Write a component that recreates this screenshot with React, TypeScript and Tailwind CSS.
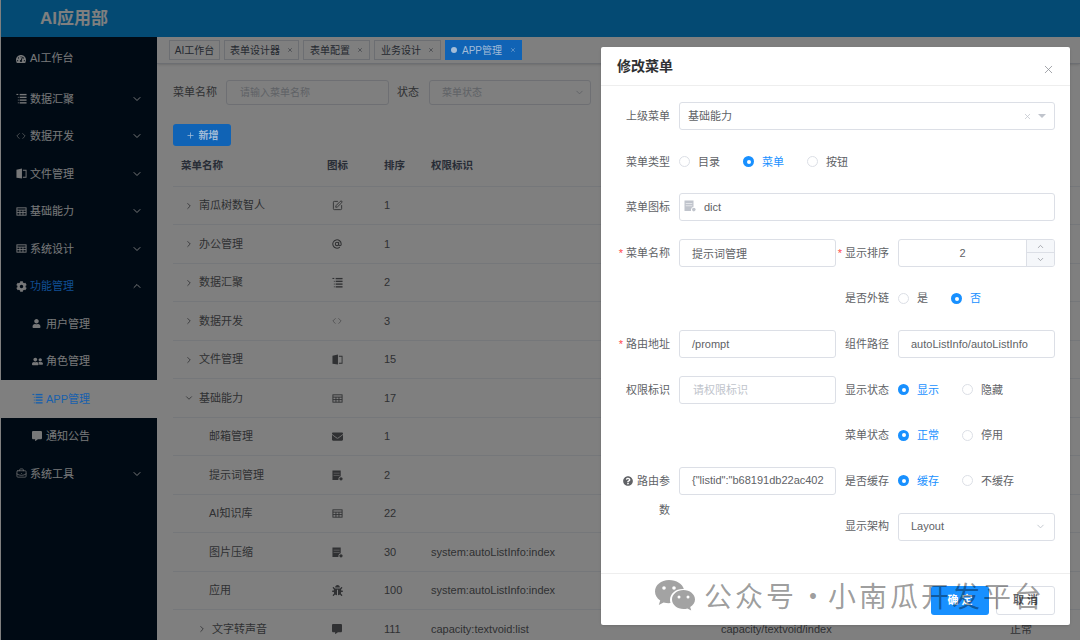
import React from 'react';
import { ChevronDown, ChevronRight, ChevronUp, X, Plus, Code, SquarePen, AtSign, BriefcaseBusiness } from 'lucide-react';
import { FaUser, FaUserFriends, FaCog, FaEnvelope, FaBug, FaCommentAlt, FaTachometerAlt, FaQuestionCircle } from 'react-icons/fa';

const font = { fontFamily: '"Liberation Sans","Noto Sans CJK SC",sans-serif' };

const TableIcon = ({ className = '' }: { className?: string }) => (
  <svg viewBox="0 0 12 12" className={className} fill="none" stroke="currentColor" strokeWidth="1">
    <rect x="1" y="2" width="10" height="8" />
    <path d="M1 4.5h10M1 7.2h10M4.3 4.5V10M7.6 4.5V10" />
  </svg>
);
const TreeIcon = ({ className = '' }: { className?: string }) => (
  <svg viewBox="0 0 12 12" className={className} fill="currentColor">
    <rect x="0.5" y="1" width="2" height="1.2" />
    <rect x="4" y="1" width="7.5" height="1.5" />
    <rect x="4" y="4" width="7.5" height="1.5" />
    <rect x="4" y="7" width="7.5" height="1.5" />
    <rect x="4" y="10" width="7.5" height="1.5" />
    <rect x="2" y="4.2" width="1" height="1" />
    <rect x="2" y="7.2" width="1" height="1" />
    <rect x="2" y="10.2" width="1" height="1" />
  </svg>
);
const DictIcon = ({ className = '' }: { className?: string }) => (
  <svg viewBox="0 0 12 12" className={className} fill="currentColor">
    <path d="M0.5 0.5h9v6.2a3 3 0 0 0-2.5 2.8v1.5H0.5z" />
    <rect x="1.7" y="3" width="6.6" height="0.8" fill="#fff" opacity="0.7" />
    <rect x="1.7" y="5.4" width="6.6" height="0.8" fill="#fff" opacity="0.7" />
    <circle cx="9.8" cy="9.6" r="1.8" />
  </svg>
);
const BookIcon = ({ className = '' }: { className?: string }) => (
  <svg viewBox="0 0 12 12" className={className} fill="currentColor">
    <path d="M0.5 2L6.5 0.5V11.5L0.5 10.5z" />
    <path d="M7.5 2h4v8.5h-4v-1h3V3h-3z" />
  </svg>
);

type MenuItem = { icon: React.ReactNode; label: string; arrow?: 'down' | 'up'; sub?: boolean; active?: boolean; blue?: boolean; first?: boolean };
const menu: MenuItem[] = [
  { icon: <FaTachometerAlt size={10} />, label: 'AI工作台', first: true },
  { icon: <TreeIcon className="w-[11px] h-[11px]" />, label: '数据汇聚', arrow: 'down' },
  { icon: <Code size={10} className="opacity-70" />, label: '数据开发', arrow: 'down' },
  { icon: <BookIcon className="w-[11px] h-[11px]" />, label: '文件管理', arrow: 'down' },
  { icon: <TableIcon className="w-[11px] h-[11px]" />, label: '基础能力', arrow: 'down' },
  { icon: <TableIcon className="w-[11px] h-[11px]" />, label: '系统设计', arrow: 'down' },
  { icon: <FaCog size={11} />, label: '功能管理', arrow: 'up', blue: true },
  { icon: <FaUser size={9} />, label: '用户管理', sub: true },
  { icon: <FaUserFriends size={11} />, label: '角色管理', sub: true },
  { icon: <TreeIcon className="w-[11px] h-[11px]" />, label: 'APP管理', sub: true, active: true },
  { icon: <FaCommentAlt size={10} />, label: '通知公告', sub: true },
  { icon: <BriefcaseBusiness size={11} strokeWidth={1.5} />, label: '系统工具', arrow: 'down' },
];

function Sidebar() {
  return (
    <aside className="w-[156px] shrink-0 bg-[#001428] text-[#eef0f2] text-[11px]">
      {menu.map((m) => (
        <div
          key={m.label}
          className={`flex items-center ${m.first ? 'h-[43px]' : 'h-[37.5px]'} ${m.sub ? 'pl-[31px]' : 'pl-[15px]'} ${m.active ? 'bg-white' : ''}`}
        >
          <span className={`w-[14px] flex justify-start ${m.active ? 'relative z-10 text-[#1760ad]' : ''}`}>{m.icon}</span>
          <span className={`flex-1 ${m.active ? 'relative z-10 text-[#1760ad]' : ''} ${m.blue ? 'relative z-10 text-[#114f95]' : ''}`}>{m.label}</span>
          {m.arrow === 'down' && <ChevronDown size={12} className="mr-[14px]" />}
          {m.arrow === 'up' && <ChevronUp size={12} className="mr-[14px]" />}
        </div>
      ))}
    </aside>
  );
}

const tabs = [
  { label: 'AI工作台', w: 'w-[51px]' },
  { label: '表单设计器', close: true, w: 'w-[75px]' },
  { label: '表单配置', close: true, w: 'w-[67px]' },
  { label: '业务设计', close: true, w: 'w-[67px]' },
];

function Tabs() {
  return (
    <div className="h-[27px] shrink-0 flex items-start gap-[4px] pl-[12px] pt-[3px] text-[10px] text-[#495060] border-b border-[#d8dce5] shadow-sm">
      {tabs.map((t) => (
        <div key={t.label} className={`${t.w} h-[20px] border border-[#d8dce5] flex items-center justify-center gap-[7px]`}>
          <span>{t.label}</span>
          {t.close && <X size={6} />}
        </div>
      ))}
      <div className="relative z-10 w-[77px] h-[20px] bg-[#1063b5] text-[#a3bcd8] flex items-center justify-center gap-[5px]">
        <span className="w-[6px] h-[6px] rounded-full bg-[#a3bcd8]" />
        <span>APP管理</span>
        <X size={6} className="ml-[3px]" />
      </div>
    </div>
  );
}

type Row = { name: string; indent?: number; tree?: 'r' | 'd'; icon: React.ReactNode; order: string; perm?: string; path?: string; status?: string };
const I = 'w-[11px] h-[11px]';
const rows: Row[] = [
  { name: '南瓜树数智人', tree: 'r', icon: <SquarePen size={11} />, order: '1' },
  { name: '办公管理', tree: 'r', icon: <AtSign size={10} strokeWidth={2.5} />, order: '1' },
  { name: '数据汇聚', tree: 'r', icon: <TreeIcon className={I} />, order: '2' },
  { name: '数据开发', tree: 'r', icon: <Code size={10} className="opacity-60" />, order: '3' },
  { name: '文件管理', tree: 'r', icon: <BookIcon className={I} />, order: '15' },
  { name: '基础能力', tree: 'd', icon: <TableIcon className={I} />, order: '17' },
  { name: '邮箱管理', indent: 1, icon: <FaEnvelope size={11} />, order: '1' },
  { name: '提示词管理', indent: 1, icon: <DictIcon className={I} />, order: '2' },
  { name: 'AI知识库', indent: 1, icon: <TableIcon className={I} />, order: '22' },
  { name: '图片压缩', indent: 1, icon: <DictIcon className={I} />, order: '30', perm: 'system:autoListInfo:index' },
  { name: '应用', indent: 1, icon: <FaBug size={11} />, order: '100', perm: 'system:autoListInfo:index' },
  { name: '文字转声音', indent: 2, tree: 'r', icon: <FaCommentAlt size={10} />, order: '111', perm: 'capacity:textvoid:list', path: 'capacity/textvoid/index', status: '正常' },
];

function TableRow({ r }: { r: Row }) {
  return (
    <div className="flex items-center h-[38.5px] shrink-0 border-b border-[#ebeef5] text-[11px] text-[#606266]">
      <div className={`w-[154px] shrink-0 flex items-center ${r.indent === 1 ? 'pl-[36px]' : r.indent === 2 ? 'pl-[24px]' : 'pl-[11px]'}`}>
        {r.tree === 'r' && <ChevronRight size={10} className="mr-[5px] shrink-0" />}
        {r.tree === 'd' && <ChevronDown size={10} className="mr-[5px] shrink-0" />}
        <span>{r.name}</span>
      </div>
      <div className="w-[57px] shrink-0 flex">
        <span className="w-[20px] flex justify-center">{r.icon}</span>
      </div>
      <div className="w-[47px] shrink-0">{r.order}</div>
      <div className="w-[290px] shrink-0">{r.perm}</div>
      <div className="w-[289px] shrink-0">{r.path}</div>
      <div>{r.status}</div>
    </div>
  );
}

function Main() {
  return (
    <main className="flex-1 min-w-0 flex flex-col bg-white overflow-hidden">
      <Tabs />
      <div className="pl-[16px] flex-1 min-h-0 flex flex-col">
        <div className="flex items-center h-[25px] mt-[16px] text-[11px] text-[#606266] shrink-0">
          <span className="w-[53px]">菜单名称</span>
          <div className="w-[163px] h-[25px] border border-[#dcdfe6] rounded-[3px] flex items-center pl-[13px] text-[10px] text-[#c0c4cc]">请输入菜单名称</div>
          <span className="ml-[8px] w-[32px]">状态</span>
          <div className="w-[162px] h-[25px] border border-[#dcdfe6] rounded-[3px] flex items-center justify-between pl-[12px] pr-[5px] text-[10px] text-[#c0c4cc]">
            <span>菜单状态</span>
            <ChevronDown size={11} />
          </div>
        </div>
        <div className="relative z-10 mt-[19px] w-[58px] h-[22px] shrink-0 rounded-[3px] bg-[#1063b5] text-[#a3bcd8] text-[10px] font-bold flex items-center justify-center gap-[4px]">
          <Plus size={9} />
          <span>新增</span>
        </div>
        <div className="flex items-center h-[40.8px] shrink-0 border-b border-[#ebeef5] text-[10.5px] font-bold text-[#515a6e]">
          <div className="w-[154px] pl-[8px]">菜单名称</div>
          <div className="w-[57px]">图标</div>
          <div className="w-[47px]">排序</div>
          <div>权限标识</div>
        </div>
        {rows.map((r) => (
          <TableRow key={r.name} r={r} />
        ))}
      </div>
    </main>
  );
}

function Label({ children, required }: { children: React.ReactNode; required?: boolean }) {
  return (
    <div className="w-[54px] shrink-0 mr-[9px] text-right text-[11px] text-[#606266] whitespace-nowrap">
      {required && <span className="text-[#ff4949] mr-[3px]">*</span>}
      {children}
    </div>
  );
}

function Radio({ label, checked, mr }: { label: string; checked?: boolean; mr: string }) {
  return (
    <div className={`flex items-center ${mr}`}>
      {checked ? (
        <span className="w-[11px] h-[11px] rounded-full bg-[#1890ff] flex items-center justify-center shrink-0">
          <span className="w-[4px] h-[4px] rounded-full bg-white" />
        </span>
      ) : (
        <span className="w-[11px] h-[11px] rounded-full border border-[#dcdfe6] shrink-0" />
      )}
      <span className={`ml-[8px] text-[11px] ${checked ? 'text-[#1890ff]' : 'text-[#606266]'}`}>{label}</span>
    </div>
  );
}

const inputCls = 'h-[28px] border border-[#dcdfe6] rounded-[3px] flex items-center text-[11px] text-[#606266]';

function Cell({ children, className = '' }: { children?: React.ReactNode; className?: string }) {
  return <div className={`flex items-center ${className}`}>{children}</div>;
}

function Modal() {
  return (
    <div className="absolute z-20 left-[601px] top-[47px] w-[469px] h-[578px] bg-white rounded-[2px] shadow flex flex-col">
      <div className="h-[39px] shrink-0 border-b border-[#eeeeee] pl-[16px] pr-[15px] flex items-center justify-between">
        <span className="text-[14px] font-bold text-[#303133]">修改菜单</span>
        <X size={13} strokeWidth={1.5} className="text-[#909399] mt-[6px]" />
      </div>
      <div className="flex-1 min-h-0 pt-[7.4px] pl-[15px] pr-[15px] grid grid-cols-[220px_219px] auto-rows-[45.6px] content-start">
        <Cell className="col-span-2">
          <Label>上级菜单</Label>
          <div className={`${inputCls} flex-1 pl-[8px] pr-[8px] justify-between`}>
            <span>基础能力</span>
            <span className="flex items-center gap-[6px] text-[#c0c4cc]">
              <X size={9} />
              <span className="w-0 h-0 border-x-[4px] border-x-transparent border-t-[4px] border-t-[#c0c4cc]" />
            </span>
          </div>
        </Cell>
        <Cell className="col-span-2">
          <Label>菜单类型</Label>
          <Radio label="目录" mr="mr-[23px]" />
          <Radio label="菜单" checked mr="mr-[23px]" />
          <Radio label="按钮" mr="" />
        </Cell>
        <Cell className="col-span-2">
          <Label>菜单图标</Label>
          <div className={`${inputCls} flex-1 pl-[4px]`}>
            <DictIcon className="w-[12px] h-[12px] text-[#c0c4cc] -mt-[3px]" />
            <span className="ml-[8px]">dict</span>
          </div>
        </Cell>
        <Cell>
          <Label required>菜单名称</Label>
          <div className={`${inputCls} w-[157px] pl-[12px] pt-[2px]`}>提示词管理</div>
        </Cell>
        <Cell className="-ml-px">
          <Label required>显示排序</Label>
          <div className={`${inputCls} w-[157px] overflow-hidden`}>
            <span className="flex-1 text-center">2</span>
            <div className="w-[28px] h-full border-l border-[#dcdfe6] flex flex-col bg-[#f5f7fa] text-[#909399]">
              <span className="flex-1 flex items-center justify-center border-b border-[#dcdfe6]"><ChevronUp size={9} /></span>
              <span className="flex-1 flex items-center justify-center"><ChevronDown size={9} /></span>
            </div>
          </div>
        </Cell>
        <Cell />
        <Cell className="-ml-px">
          <Label>是否外链</Label>
          <Radio label="是" mr="mr-[23px]" />
          <Radio label="否" checked mr="" />
        </Cell>
        <Cell>
          <Label required>路由地址</Label>
          <div className={`${inputCls} w-[157px] pl-[12px] border-[#c0c4cc]`}>/prompt</div>
        </Cell>
        <Cell className="-ml-px">
          <Label>组件路径</Label>
          <div className={`${inputCls} w-[157px] pl-[12px]`}>autoListInfo/autoListInfo</div>
        </Cell>
        <Cell>
          <Label>权限标识</Label>
          <div className={`${inputCls} w-[157px] pl-[13px] !text-[#c0c4cc]`}>请权限标识</div>
        </Cell>
        <Cell className="-ml-px">
          <Label>显示状态</Label>
          <Radio label="显示" checked mr="mr-[23px]" />
          <Radio label="隐藏" mr="" />
        </Cell>
        <Cell />
        <Cell className="-ml-px">
          <Label>菜单状态</Label>
          <Radio label="正常" checked mr="mr-[23px]" />
          <Radio label="停用" mr="" />
        </Cell>
        <div className="row-span-2 flex items-start pt-[8.5px]">
          <div className="w-[54px] shrink-0 mr-[9px] text-right text-[11px] leading-[28px] text-[#606266]">
            <span className="inline-flex items-center whitespace-nowrap -ml-[6px]">
              <FaQuestionCircle size={10} className="mr-[4px]" />
              路由参
            </span>
            <br />数
          </div>
          <div className={`${inputCls} w-[157px] pl-[12px] whitespace-nowrap overflow-hidden`}>{'{"listid":"b68191db22ac402'}</div>
        </div>
        <Cell className="-ml-px">
          <Label>是否缓存</Label>
          <Radio label="缓存" checked mr="mr-[23px]" />
          <Radio label="不缓存" mr="" />
        </Cell>
        <Cell className="-ml-px">
          <Label>显示架构</Label>
          <div className={`${inputCls} w-[157px] pl-[12px] pr-[8px] justify-between`}>
            <span>Layout</span>
            <ChevronDown size={11} className="text-[#c0c4cc]" />
          </div>
        </Cell>
      </div>
      <div className="h-[52px] shrink-0 border-t border-[#eeeeee] flex items-center justify-end pr-[15px] gap-[7px] pt-[1px]">
        <div className="w-[58px] h-[29px] rounded-[3px] bg-[#1890ff] text-white text-[11px] font-bold flex items-center justify-center">确 定</div>
        <div className="w-[59px] h-[29px] rounded-[3px] border border-[#dcdfe6] text-[#606266] text-[11px] font-bold flex items-center justify-center">取 消</div>
      </div>
    </div>
  );
}

function Watermark() {
  return (
    <div className="absolute z-30 left-[654px] top-[578px] flex items-center text-black/40 pointer-events-none whitespace-nowrap">
      <svg viewBox="0 0 42 34" className="w-[42px] h-[34px]">
        <path fill="#a3a3a3" d="M15 1C7 1 1 6.2 1 12.6c0 3.7 2 6.8 5.2 9L4.8 26l4.8-2.6c1.7.5 3.5.8 5.4.8.5 0 1 0 1.500-.1-.3-1-.5-2-.5-3.100 0-6.100 5.600-11 12.500-11h1.300C28.700 5 22.500 1 15 1z" />
        <circle cx="10" cy="9" r="1.8" fill="#fff" />
        <circle cx="20" cy="9" r="1.8" fill="#fff" />
        <path fill="#a3a3a3" d="M41 20.500c0-5.300-5.200-9.500-11.500-9.500S18 15.200 18 20.500 23.200 30 29.500 30c1.400 0 2.700-.2 3.900-.6l3.800 2.100-1-3.500c2.900-1.800 4.800-4.500 4.800-7.500z" />
        <circle cx="25" cy="18" r="1.5" fill="#fff" />
        <circle cx="34" cy="18" r="1.5" fill="#fff" />
      </svg>
      <span className="ml-[8px] text-[28px] tracking-[3px] leading-[36px] -mt-[1px]" style={{ fontFamily: '"Noto Sans CJK SC",sans-serif' }}>
        公众号<span className="ml-[2px] mr-[1px] inline-block w-[28px] text-center tracking-normal">·</span>小南瓜开发平台
      </span>
    </div>
  );
}

export default function App() {
  return (
    <div className="relative w-[1080px] h-[640px] overflow-hidden bg-white" style={font}>
      <div className="flex flex-col h-full pl-px">
        <header className="h-[37px] shrink-0 bg-[#0994e6] flex items-center pl-[39px] text-[17px] font-bold text-white">AI应用部</header>
        <div className="flex flex-1 min-h-0">
          <Sidebar />
          <Main />
        </div>
      </div>
      <div className="absolute inset-0 bg-black/50" />
      <Modal />
      <Watermark />
    </div>
  );
}
